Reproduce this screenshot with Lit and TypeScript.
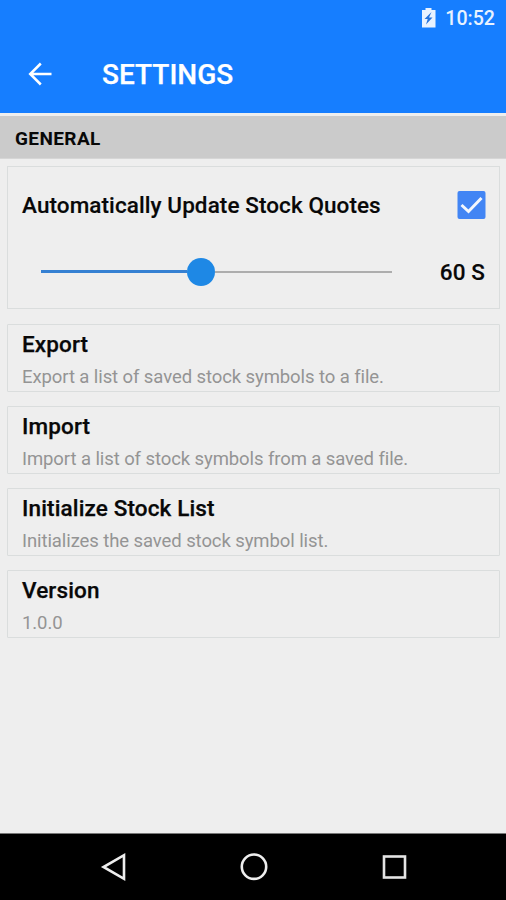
import { LitElement, html, css } from "lit";
import { customElement, property } from "lit/decorators.js";

@customElement("setting-row")
class SettingRow extends LitElement {
  @property() heading = "";
  @property() detail = "";

  static styles = css`
    :host {
      display: block;
      box-sizing: border-box;
      height: 68px;
      border: 1.5px solid #dadddd;
      border-radius: 1px;
      padding: 4px 14px 0;
    }
    .heading {
      font-weight: 500;
      font-size: 22.5px;
      letter-spacing: 0.13px;
      line-height: 30px;
      color: #080808;
      -webkit-text-stroke: 0.25px #080808;
    }
    .detail {
      font-size: 18.5px;
      letter-spacing: -0.09px;
      line-height: 24px;
      margin-top: 6px;
      color: #949494;
      white-space: nowrap;
    }
  `;

  render() {
    return html`
      <div class="heading">${this.heading}</div>
      <div class="detail">${this.detail}</div>
    `;
  }
}

@customElement("app-root")
class AppRoot extends LitElement {
  @property({ type: Number }) seconds = 60;

  static styles = css`
    :host {
      display: flex;
      flex-direction: column;
      width: 506px;
      height: 900px;
      overflow: hidden;
      background: #eeeeee;
      font-family: Roboto, "Noto Sans", sans-serif;
      color: #080808;
    }
    svg {
      display: block;
      flex: none;
    }
    .top {
      background: #167eff;
      height: 113px;
      color: #fff;
      flex: none;
    }
    .status {
      height: 36px;
      display: flex;
      align-items: center;
      justify-content: flex-end;
      padding-right: 11px;
      gap: 9px;
      font-size: 19.6px;
      font-weight: 500;
      color: #e8f2ff;
    }
    .bar {
      height: 75px;
      display: flex;
      align-items: center;
      padding-left: 28px;
    }
    .title {
      font-size: 28px;
      line-height: 34px;
      font-weight: 500;
      margin: 2px 0 0 50px;
      -webkit-text-stroke: 0.25px #fff;
    }
    .section {
      flex: none;
      height: 43px;
      box-sizing: border-box;
      border-bottom: 1px solid #d6d6d6;
      margin-top: 3px;
      background: #cbcbcb;
      padding-left: 15px;
      font-size: 19px;
      letter-spacing: 0.4px;
      line-height: 46px;
      font-weight: 700;
    }
    .list {
      flex: 1;
      display: flex;
      flex-direction: column;
      padding: 7px 6px 0 7px;
      gap: 14px;
    }
    .card {
      box-sizing: border-box;
      height: 143px;
      border: 1.5px solid #dadddd;
      padding: 0 13px 0 14px;
      margin-bottom: 1px;
      font-size: 22.5px;
      letter-spacing: 0.08px;
      font-weight: 500;
      -webkit-text-stroke: 0.15px #080808;
    }
    .line {
      display: flex;
      align-items: center;
      justify-content: space-between;
      height: 76px;
    }
    .second {
      height: 57px;
      padding: 0 1px 0 19px;
    }
    .slider {
      display: flex;
      align-items: center;
      width: 351px;
    }
    .done {
      height: 3px;
      background: #3580d2;
    }
    .knob {
      width: 28px;
      height: 28px;
      border-radius: 50%;
      background: #1e88e5;
      flex: none;
    }
    .rest {
      height: 2px;
      background: #adadad;
      flex: 1;
    }
    .nav {
      flex: none;
      height: 66px;
      border-top: 1px solid #777;
      background: #000;
      display: flex;
      align-items: center;
      justify-content: space-between;
      padding: 0 97.5px 0 98.5px;
    }
  `;

  render() {
    return html`
      <div class="top">
        <div class="status">
          <svg width="15" height="20" viewBox="0 0 15 20">
            <path d="M1 2h3.5V0h6v2H14.500v17.500H1z" fill="#e8f2ff" />
            <path d="M10.500 4L3.500 11h3.200L5 16.500l6.500-7H8z" fill="#2673dc" />
          </svg>
          <span class="clock">10:52</span>
        </div>
        <div class="bar">
          <svg width="24" height="24" viewBox="0 0 24 24" fill="none" stroke="#fff" stroke-width="2.500">
            <path d="M23.500 12H2.500M12.800 1.500L2.200 12l10.600 10.500" />
          </svg>
          <span class="title">SETTINGS</span>
        </div>
      </div>
      <div class="section">GENERAL</div>
      <div class="list">
        <div class="card">
          <div class="line">
            <span class="label">Automatically Update Stock Quotes</span>
            <svg width="29" height="29" viewBox="0 0 29 29">
              <rect x="0.500" y="0" width="28" height="28" rx="2" fill="#4285f4" />
              <path d="M4.500 14l7 6.500L24.500 7" fill="none" stroke="#f4f7fc" stroke-width="3" />
            </svg>
          </div>
          <div class="line second">
            <div class="slider">
              <div class="done" style="width:${(this.seconds / 60) * 146}px"></div>
              <div class="knob"></div>
              <div class="rest"></div>
            </div>
            <span class="value">${this.seconds} S</span>
          </div>
        </div>
        <setting-row heading="Export" detail="Export a list of saved stock symbols to a file."></setting-row>
        <setting-row heading="Import" detail="Import a list of stock symbols from a saved file."></setting-row>
        <setting-row heading="Initialize Stock List" detail="Initializes the saved stock symbol list."></setting-row>
        <setting-row heading="Version" detail="1.0.0"></setting-row>
      </div>
      <div class="nav">
        <svg width="30" height="30" viewBox="0 0 30 30" fill="none" stroke="#eee" stroke-width="2.600">
          <path d="M25 3.200v23.600L4.500 15z" />
        </svg>
        <svg width="30" height="30" viewBox="0 0 30 30" fill="none" stroke="#eee" stroke-width="2.600">
          <circle cx="15" cy="14.700" r="12.200" />
        </svg>
        <svg width="30" height="30" viewBox="0 0 30 30" fill="none" stroke="#e4e4e4" stroke-width="2.600">
          <rect x="5" y="4.500" width="21" height="21" />
        </svg>
      </div>
    `;
  }
}
